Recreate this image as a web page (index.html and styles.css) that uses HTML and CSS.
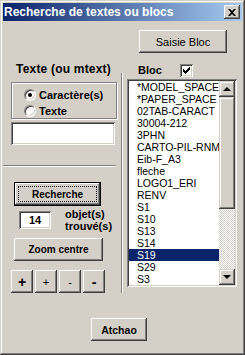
FILE: index.html
```html
<!DOCTYPE html>
<html lang="fr">
<head>
  <meta charset="UTF-8" />
  <title>Recherche de textes ou blocs</title>
  <link rel="stylesheet" href="styles.css">
</head>
<body>
  <div class="window">
    <div class="titlebar">
      <span class="title">Recherche de textes ou blocs</span>
      <button class="close">
        <svg width="8" height="7" viewBox="0 0 8 7"><path d="M0 0h2l2 2 2-2h2L5 3.5 8 7H6L4 5 2 7H0l3-3.5z" fill="#000"/></svg>
      </button>
    </div>

    <div class="top-row">
      <button class="btn saisie">Saisie Bloc</button>
    </div>

    <div class="columns">
      <div class="col-left">
        <div class="label big-label">Texte (ou mtext)</div>
        <div class="groupbox">
          <label class="radio-row"><span class="radio checked"></span>Caractère(s)</label>
          <label class="radio-row"><span class="radio"></span>Texte</label>
        </div>
        <div class="textbox wide"></div>
        <div class="hsep"></div>
        <button class="btn default recherche"><span class="focus">Recherche</span></button>
        <div class="count-row">
          <div class="textbox count">14</div>
          <div class="count-label">objet(s)<br>trouvé(s)</div>
        </div>
        <button class="btn bold zoom">Zoom centre</button>
        <div class="zoom-btns">
          <button class="btn bold big">+</button>
          <button class="btn">+</button>
          <button class="btn">-</button>
          <button class="btn bold big">-</button>
        </div>
      </div>

      <div class="vsep"></div>

      <div class="col-right">
        <div class="bloc-head">
          <span class="label">Bloc</span>
          <span class="checkbox">
            <svg width="7" height="7" viewBox="0 0 7 7"><path d="M0 2h1v1h1v1h1V3h1V2h1V1h1V0h1v3H6v1H5v1H4v1H3v1H2V6H1V5H0z" fill="#000"/></svg>
          </span>
        </div>
        <div class="listbox">
          <ul class="items" id="items"></ul>
          <div class="scrollbar">
            <div class="sb-btn"><span class="arrow up"></span></div>
            <div class="sb-thumb"></div>
            <div class="sb-track"></div>
            <div class="sb-btn"><span class="arrow down"></span></div>
          </div>
        </div>
      </div>
    </div>

    <button class="btn bold atchao">Atchao</button>
  </div>

  <script>
    const blocs = ["*MODEL_SPACE", "*PAPER_SPACE", "02TAB-CARACT", "30004-212", "3PHN",
      "CARTO-PIL-RNM", "Eib-F_A3", "fleche", "LOGO1_ERI", "RENV", "S1", "S10", "S13",
      "S14", "S19", "S29", "S3"];
    const list = document.getElementById("items");
    blocs.forEach((name) => {
      const li = document.createElement("li");
      li.textContent = name;
      if (name === "S19") li.className = "selected";
      list.appendChild(li);
    });
  </script>
</body>
</html>
```

FILE: styles.css
```css
* {
  box-sizing: border-box;
}

body {
  margin: 0;
  background: #d4d0c8;
  font-family: "Liberation Sans", Arial, sans-serif;
  font-size: 11px;
  color: #000;
}

.window {
  width: 245px;
  height: 355px;
  padding: 3px;
  background: #d4d0c8;
  box-shadow: inset -1px -1px #404040, inset 1px 1px #d4d0c8,
              inset -2px -2px #808080, inset 2px 2px #fff;
}

.titlebar {
  height: 18px;
  display: flex;
  align-items: center;
  justify-content: space-between;
  padding: 0 2px 0 1px;
  background: linear-gradient(to right, #0a246a, #a6caf0);
}

.title {
  color: #fff;
  font-weight: bold;
  font-size: 12px;
}

.close {
  width: 16px;
  height: 14px;
  padding: 0;
  border: none;
  display: flex;
  align-items: center;
  justify-content: center;
  background: #d4d0c8;
  box-shadow: inset -1px -1px #404040, inset 1px 1px #fff, inset -2px -2px #808080;
}

.btn {
  font-family: inherit;
  font-size: 11px;
  color: #000;
  background: #d4d0c8;
  border: none;
  padding: 0;
  box-shadow: inset -1px -1px #404040, inset 1px 1px #fff, inset -2px -2px #808080;
}

.btn.bold {
  font-weight: bold;
  font-size: 10px;
}

.btn.default {
  font-weight: bold;
  font-size: 10px;
  border: 1px solid #000;
  display: flex;
  padding: 3px;
}

.focus {
  flex: 1;
  display: flex;
  align-items: center;
  justify-content: center;
  outline: 1px dotted #000;
  outline-offset: -1px;
}

.top-row {
  padding: 9px 0 0 136px;
}

.saisie {
  width: 88px;
  height: 23px;
}

.columns {
  display: flex;
  height: 234px;
  margin-top: 6px;
}

.label {
  font-weight: bold;
  font-size: 11px;
  line-height: 14px;
}

.big-label {
  font-size: 12px;
  letter-spacing: 0.2px;
}

.col-left {
  width: 118px;
  padding-left: 8px;
}

.col-left > .label {
  margin: 3px 0 0 5px;
}

.groupbox {
  width: 106px;
  height: 37px;
  margin-top: 6px;
  padding: 4px 0 0 12px;
  border: 1px solid #808080;
  box-shadow: inset 1px 1px #fff, 1px 1px #fff;
}

.radio-row {
  display: flex;
  align-items: center;
  gap: 3px;
  height: 16px;
  font-weight: bold;
}

.radio {
  width: 12px;
  height: 12px;
  border-radius: 50%;
  background: #fff;
  border: 1px solid;
  border-color: #808080 #fff #fff #808080;
  box-shadow: inset 1px 1px #404040, inset -1px -1px #d4d0c8;
  display: flex;
  align-items: center;
  justify-content: center;
}

.radio.checked::after {
  content: "";
  width: 4px;
  height: 4px;
  border-radius: 50%;
  background: #000;
}

.textbox {
  background: #fff;
  box-shadow: inset 1px 1px #808080, inset -1px -1px #fff,
              inset 2px 2px #404040, inset -2px -2px #d4d0c8;
}

.textbox.wide {
  width: 104px;
  height: 23px;
  margin-top: 3px;
}

.hsep {
  width: 113px;
  height: 2px;
  margin: 20px 0 0 -8px;
  border-top: 1px solid #808080;
  border-bottom: 1px solid #fff;
}

.recherche {
  width: 87px;
  height: 24px;
  margin: 15px 0 0 3px;
}

.count-row {
  display: flex;
  gap: 14px;
  margin: 2px 0 0 8px;
}

.textbox.count {
  width: 32px;
  height: 18px;
  margin-top: 3px;
  font-weight: bold;
  text-align: center;
  line-height: 18px;
}

.count-label {
  font-weight: bold;
  line-height: 12px;
}

.zoom {
  width: 89px;
  height: 23px;
  margin: 6px 0 0 3px;
}

.zoom-btns {
  display: flex;
  gap: 2px;
  margin-top: 9px;
}

.zoom-btns .btn {
  width: 22px;
  height: 23px;
}

.zoom-btns .big {
  font-size: 14px;
}

.vsep {
  width: 2px;
  height: 220px;
  margin-top: 14px;
  border-left: 1px solid #808080;
  border-right: 1px solid #fff;
}

.col-right {
  flex: 1;
  padding-left: 4px;
}

.bloc-head {
  display: flex;
  align-items: center;
  height: 16px;
  margin: 3px 0 0 11px;
  gap: 18px;
}

.checkbox {
  width: 13px;
  height: 13px;
  background: #fff;
  display: flex;
  align-items: center;
  justify-content: center;
  box-shadow: inset 1px 1px #808080, inset -1px -1px #fff,
              inset 2px 2px #404040, inset -2px -2px #d4d0c8;
}

.listbox {
  display: flex;
  width: 110px;
  height: 208px;
  margin-top: 1px;
  padding: 2px;
  background: #fff;
  box-shadow: inset 1px 1px #808080, inset -1px -1px #fff,
              inset 2px 2px #404040, inset -2px -2px #d4d0c8;
}

.items {
  flex: 1;
  margin: 0;
  padding: 0;
  list-style: none;
  overflow: hidden;
}

.items li {
  height: 12px;
  line-height: 12px;
  padding-left: 8px;
  font-size: 10.5px;
  white-space: nowrap;
}

.items li.selected {
  background: #0a246a;
  color: #fff;
}

.scrollbar {
  width: 16px;
  display: flex;
  flex-direction: column;
}

.sb-btn, .sb-thumb {
  background: #d4d0c8;
  box-shadow: inset -1px -1px #404040, inset 1px 1px #d4d0c8,
              inset -2px -2px #808080, inset 2px 2px #fff;
}

.sb-btn {
  height: 16px;
  display: flex;
  align-items: center;
  justify-content: center;
}

.sb-thumb {
  height: 112px;
}

.sb-track {
  flex: 1;
  background-image: conic-gradient(#fff 25%, #d4d0c8 0 50%, #fff 0 75%, #d4d0c8 0);
  background-size: 2px 2px;
}

.arrow {
  width: 0;
  height: 0;
  border-left: 4px solid transparent;
  border-right: 4px solid transparent;
}

.arrow.up {
  border-bottom: 4px solid #000;
}

.arrow.down {
  border-top: 4px solid #000;
}

.atchao {
  width: 56px;
  height: 23px;
  margin: 25px 0 0 88px;
}

.btn.atchao {
  font-size: 10.5px;
}
```
